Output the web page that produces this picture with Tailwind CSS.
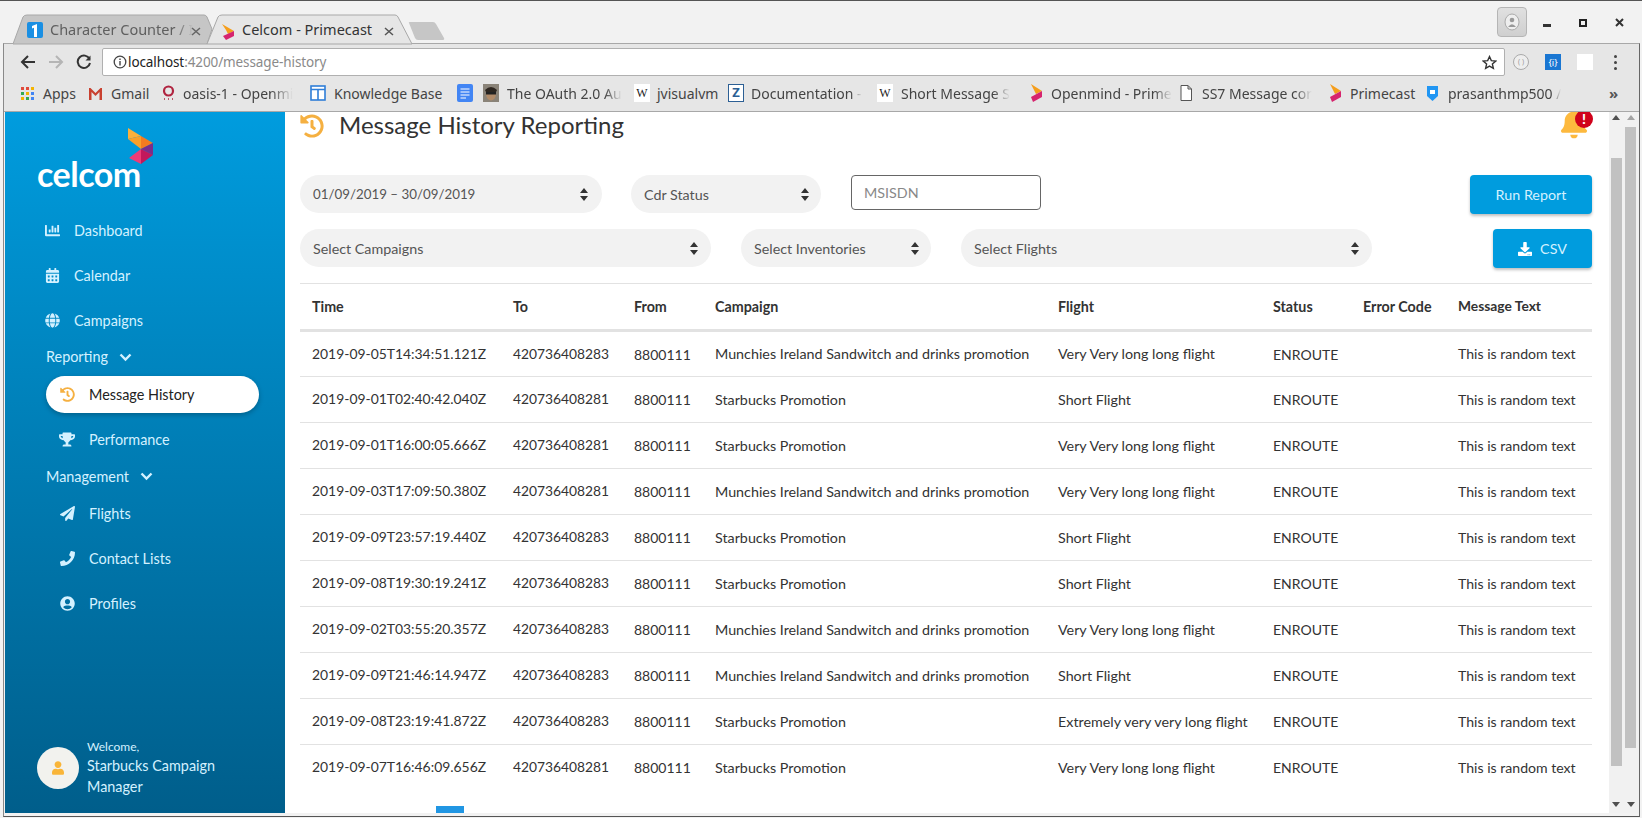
<!DOCTYPE html>
<html lang="en">
<head>
    <meta charset="UTF-8">
    <title>Celcom - Primecast</title>
    <script src="https://cdn.jsdelivr.net/npm/@tailwindcss/browser@4"></script>
</head>
<body class="bg-white overflow-hidden">
<div class="relative w-[1642px] h-[818px] bg-[#f2f2f2] overflow-hidden flex flex-col pl-[3px] pr-[2px] pb-[1px] font-['Noto_Sans',sans-serif] border-t border-[#555]">

    <!-- Tab strip -->
    <div class="relative h-[42px] shrink-0">
        <svg class="absolute -left-[3px] top-0" width="460" height="44" viewBox="0 0 460 44">
            <path d="M13 43 L23 16 Q24 14 27 14 L204 14 Q206 14 207 16 L212 28 L207 43 Z" fill="#c6c6c6" stroke="#a8a8a8"/>
            <path d="M207 43 L218 16 Q219 14 222 14 L395 14 Q397 14 398 16 L412 43 Z" fill="#e6e6e6" stroke="#a8a8a8"/>
            <path d="M409 22 Q408 21 410 21 L433 21 Q435 21 436 23 L444 37 Q445 39 442 39 L418 39 Q416 39 415 37 Z" fill="#c6c6c6"/>
            <rect x="27" y="21" width="16" height="16" rx="2" fill="#1a8fe3"/>
            <path d="M32 25 L37 23 L37 36 L34 36 L34 26.800 L32 27.500 Z" fill="#fff"/>
            <path d="M222 23 L234 30 L228 33 L226 29 Z" fill="#f59e1b"/>
            <path d="M234 30 L234 35 L226 39 L223 35 Z" fill="#d6246e"/>
            <path d="M192 27 L200 34 M200 27 L192 34" stroke="#666" stroke-width="1.500"/>
            <path d="M385 27 L393 34 M393 27 L385 34" stroke="#555" stroke-width="1.500"/>
        </svg>
        <span class="absolute left-[47px] top-[19px] whitespace-nowrap text-[14.500px] leading-[19px] text-[#5f5f5f] [mask-image:linear-gradient(90deg,#000_88%,transparent)]">Character Counter / I</span>
        <span class="absolute left-[239px] top-[19px] whitespace-nowrap text-[14.500px] leading-[19px] text-[#333]">Celcom - Primecast</span>
        <!-- Window controls -->
        <div class="absolute left-[1494px] top-[6px] w-[30px] h-[30px] rounded-[4px] border border-[#b5b5b5] bg-gradient-to-b from-[#e0e0e0] to-[#cfcfcf] flex items-center justify-center">
            <svg width="16" height="18" viewBox="0 0 16 18"><ellipse cx="8" cy="9" rx="7" ry="8" fill="#eee" stroke="#aaa"/><circle cx="8" cy="7" r="2.300" fill="#999"/><path d="M4 14 Q8 8.500 12 14 Z" fill="#999"/></svg>
        </div>
        <div class="absolute left-[1540px] top-[23px] w-[8px] h-[3px] bg-[#333]"></div>
        <div class="absolute left-[1576px] top-[18px] w-[8px] h-[8px] border-2 border-[#222]"></div>
        <svg class="absolute left-[1612px] top-[17px]" width="9" height="9" viewBox="0 0 9 9"><path d="M1 1 L8 8 M8 1 L1 8" stroke="#333" stroke-width="2"/></svg>
    </div>

    <!-- Window body with frame -->
    <div class="flex-1 min-h-0 flex flex-col border-l border-r border-b border-t border-l-[#8a8a8a] border-r-[#666] border-b-[#555] border-t-[#a8a8a8]">

    <!-- Browser toolbar -->
    <div class="h-[36px] shrink-0 bg-[#e6e6e6] flex items-center">
        <div class="w-[98px] shrink-0 flex items-center pl-[16px] gap-[12px]">
            <svg width="16" height="16" viewBox="0 0 16 16"><path d="M15 8 H2 M8 2 L2 8 L8 14" fill="none" stroke="#333" stroke-width="2"/></svg>
            <svg width="16" height="16" viewBox="0 0 16 16"><path d="M1 8 H14 M8 2 L14 8 L8 14" fill="none" stroke="#b5b5b5" stroke-width="2"/></svg>
            <svg width="16" height="16" viewBox="0 0 16 16"><path d="M13.500 5 A6.200 6.200 0 1 0 14 9" fill="none" stroke="#333" stroke-width="2"/><path d="M14.500 1.500 V6.500 H9.500 Z" fill="#333"/></svg>
        </div>
        <div class="w-[1403px] h-[28px] shrink-0 bg-white border border-[#b0b0b0] rounded-[2px] flex items-center pl-[10px] pr-[7px]">
            <svg width="14" height="14" viewBox="0 0 14 14"><circle cx="7" cy="7" r="5.800" fill="none" stroke="#444" stroke-width="1.300"/><rect x="6.300" y="6" width="1.400" height="4.500" fill="#444"/><rect x="6.300" y="3.500" width="1.400" height="1.500" fill="#444"/></svg>
            <span class="ml-[1px] text-[13.500px] text-[#222] tracking-[-0.1px]">localhost<span class="text-[#8a8a8a]">:4200/message-history</span></span>
            <svg class="ml-auto" width="15" height="15" viewBox="0 0 24 24"><path d="M12 2.500 L14.900 9 L22 9.700 L16.600 14.400 L18.200 21.500 L12 17.800 L5.800 21.500 L7.400 14.400 L2 9.700 L9.100 9 Z" fill="none" stroke="#333" stroke-width="2.200"/></svg>
        </div>
        <div class="flex-1 flex items-center pl-[8px]">
            <div class="w-[16px] h-[16px] rounded-full border border-[#aaa] bg-[#eee] flex items-center justify-center text-[7px] text-[#999]">( )</div>
            <div class="ml-[16px] w-[16px] h-[16px] bg-[#1976d2] flex items-center justify-center text-[9px] leading-none text-white">{i}</div>
            <div class="ml-[16px] w-[16px] h-[16px] bg-white"></div>
            <div class="ml-[21px] flex flex-col gap-[3px]">
                <span class="w-[3px] h-[3px] rounded-full bg-[#444]"></span>
                <span class="w-[3px] h-[3px] rounded-full bg-[#444]"></span>
                <span class="w-[3px] h-[3px] rounded-full bg-[#444]"></span>
            </div>
        </div>
    </div>

    <!-- Bookmarks bar -->
    <div class="h-[32px] shrink-0 bg-[#e6e6e6] border-b border-[#a8a8a8] flex items-center text-[14px] text-[#444] whitespace-nowrap pl-[16px] pb-[5px]">
        <div class="w-[68px] shrink-0 flex items-center gap-[8px]">
            <svg width="15" height="15" viewBox="0 0 15 15">
                <rect x="1" y="1" width="3" height="3" fill="#e04a3a"/><rect x="6" y="1" width="3" height="3" fill="#e04a3a"/><rect x="11" y="1" width="3" height="3" fill="#f4b400"/>
                <rect x="1" y="6" width="3" height="3" fill="#34a853"/><rect x="6" y="6" width="3" height="3" fill="#f4b400"/><rect x="11" y="6" width="3" height="3" fill="#4285f4"/>
                <rect x="1" y="11" width="3" height="3" fill="#f4b400"/><rect x="6" y="11" width="3" height="3" fill="#34a853"/><rect x="11" y="11" width="3" height="3" fill="#4285f4"/>
            </svg>
            <span>Apps</span>
        </div>
        <div class="w-[74px] shrink-0 flex items-center gap-[8px]">
            <svg width="15" height="13" viewBox="0 0 15 13"><path d="M1 13 V1 H2.500 L7.500 6 L12.500 1 H14 V13 H11.500 V5 L7.500 9 L3.500 5 V13 Z" fill="#c9402f"/></svg>
            <span>Gmail</span>
        </div>
        <div class="w-[148px] shrink-0 flex items-center gap-[8px]">
            <svg width="13" height="17" viewBox="0 0 13 17"><circle cx="6.500" cy="6" r="4.500" fill="none" stroke="#b02440" stroke-width="2.200"/><path d="M2 14 H3 M6 14 H7 M10 14 H11" stroke="#b02440" stroke-width="1.500"/></svg>
            <span class="[mask-image:linear-gradient(90deg,#000_80%,transparent)]">oasis-1 - Openmi</span>
        </div>
        <div class="w-[147px] shrink-0 flex items-center gap-[8px]">
            <svg width="16" height="16" viewBox="0 0 16 16"><rect x="1" y="1" width="14" height="14" fill="#fff" stroke="#2f7ed8" stroke-width="1.600"/><path d="M1 4.500 H15 M8 4.500 V15" stroke="#2f7ed8" stroke-width="1.600"/></svg>
            <span>Knowledge Base</span>
        </div>
        <div class="w-[26px] shrink-0">
            <svg width="16" height="18" viewBox="0 0 16 18"><rect width="16" height="18" rx="2" fill="#4285f4"/><path d="M3.500 5 H12.500 M3.500 8 H12.500 M3.500 11 H12.500 M3.500 14 H9" stroke="#fff" stroke-width="1.200"/></svg>
        </div>
        <div class="w-[151px] shrink-0 flex items-center gap-[8px]">
            <svg width="16" height="18" viewBox="0 0 16 18"><rect width="16" height="18" fill="#8a8378"/><ellipse cx="8" cy="10" rx="5" ry="6.500" fill="#b08a68"/><rect x="3" y="8" width="10" height="2.500" fill="#222"/><path d="M2 6 Q8 0 14 6 L13 8 L3 8 Z" fill="#2d2620"/></svg>
            <span class="[mask-image:linear-gradient(90deg,#000_85%,transparent)]">The OAuth 2.0 Au</span>
        </div>
        <div class="w-[94px] shrink-0 flex items-center gap-[7px]">
            <span class="w-[16px] h-[18px] bg-white flex items-center justify-center font-['Liberation_Serif',serif] text-[12px] text-[#222]">W</span>
            <span>jvisualvm</span>
        </div>
        <div class="w-[149px] shrink-0 flex items-center gap-[7px]">
            <span class="w-[16px] h-[18px] bg-white border border-[#2c5f94] flex items-center justify-center text-[13px] font-bold text-[#2c5f94]">Z</span>
            <span class="[mask-image:linear-gradient(90deg,#000_90%,transparent)]">Documentation -</span>
        </div>
        <div class="w-[152px] shrink-0 flex items-center gap-[8px]">
            <span class="w-[16px] h-[18px] bg-white flex items-center justify-center font-['Liberation_Serif',serif] text-[12px] text-[#222]">W</span>
            <span class="[mask-image:linear-gradient(90deg,#000_85%,transparent)]">Short Message S</span>
        </div>
        <div class="w-[150px] shrink-0 flex items-center gap-[8px]">
            <svg width="14" height="18" viewBox="0 0 14 18"><path d="M2 0 L13 7 L7 10 L5 6 Z" fill="#f59e1b"/><path d="M13 7 L13 13 L4 18 L2 13 Z" fill="#d6246e"/></svg>
            <span class="[mask-image:linear-gradient(90deg,#000_85%,transparent)]">Openmind - Prime</span>
        </div>
        <div class="w-[149px] shrink-0 flex items-center gap-[9px]">
            <svg width="14" height="18" viewBox="0 0 14 18"><path d="M2 1.500 H9 L12.500 5 V16.500 H2 Z M9 1.500 V5 H12.500" fill="#fff" stroke="#555"/></svg>
            <span class="[mask-image:linear-gradient(90deg,#000_85%,transparent)]">SS7 Message cor</span>
        </div>
        <div class="w-[99px] shrink-0 flex items-center gap-[8px]">
            <svg width="14" height="18" viewBox="0 0 14 18"><path d="M2 0 L13 7 L7 10 L5 6 Z" fill="#f59e1b"/><path d="M13 7 L13 13 L4 18 L2 13 Z" fill="#d6246e"/></svg>
            <span>Primecast</span>
        </div>
        <div class="w-[182px] shrink-0 flex items-center gap-[10px]">
            <svg width="11" height="15" viewBox="0 0 11 15"><path d="M0 0 H11 V10 L5.500 15 L0 10 Z" fill="#2196f3"/><rect x="3" y="4" width="5" height="4" fill="#fff"/></svg>
            <span class="[mask-image:linear-gradient(90deg,#000_92%,transparent)]">prasanthmp500 /</span>
        </div>
        <span class="text-[15px] font-bold text-[#555]">»</span>
    </div>

    <!-- Page -->
    <div class="flex-1 min-h-0 flex pl-[1px] pb-[3px] font-['Lato',sans-serif]">
        <!-- Sidebar -->
        <aside class="w-[280px] shrink-0 flex flex-col bg-gradient-to-b from-[#009cde] to-[#005e8b] text-[#d4f1ff] text-[14.400px] pl-[41px]">
            <svg class="mt-[16px] ml-[82px]" width="26" height="37" viewBox="0 0 26 37">
                <path d="M0 0 L13 8 L0 11 Z" fill="#fbb03b"/>
                <path d="M0 11 L13 8 L13 21 Z" fill="#f9a02a"/>
                <path d="M13 8 L25 15 L13 21 Z" fill="#f47b20"/>
                <path d="M25 15 L25 27 L13 21 Z" fill="#7b2d8b"/>
                <path d="M13 21 L25 27 L13 36 Z" fill="#c2185b"/>
                <path d="M13 21 L13 36 L1 30 Z" fill="#ec3b78"/>
            </svg>
            <div class="-ml-[9px] -mt-[4px] h-[32px] font-bold text-[34px] leading-[26px] text-white tracking-[-0.5px]">celcom</div>
            <nav class="mt-[15px] flex flex-col">
                <a class="h-[45px] flex items-center">
                    <svg class="w-[15px] h-[15px] fill-current mr-[14px] -ml-[1px]" viewBox="0 0 512 512"><path d="M332.800 320h38.400c6.400 0 12.800-6.400 12.800-12.800V172.800c0-6.400-6.400-12.800-12.800-12.800h-38.400c-6.400 0-12.800 6.400-12.800 12.800v134.400c0 6.400 6.400 12.800 12.800 12.800zm96 0h38.400c6.400 0 12.800-6.400 12.800-12.800V76.800c0-6.400-6.400-12.800-12.800-12.800h-38.400c-6.400 0-12.800 6.400-12.800 12.800v230.400c0 6.400 6.400 12.800 12.800 12.800zm-288 0h38.400c6.400 0 12.800-6.400 12.800-12.800v-70.400c0-6.400-6.400-12.800-12.800-12.800h-38.400c-6.400 0-12.800 6.400-12.800 12.800v70.400c0 6.400 6.400 12.800 12.800 12.800zm96 0h38.400c6.400 0 12.800-6.400 12.800-12.800V108.800c0-6.400-6.400-12.800-12.800-12.800h-38.400c-6.400 0-12.800 6.400-12.800 12.800v198.400c0 6.400 6.400 12.800 12.800 12.800zM496 384H64V80c0-8.840-7.160-16-16-16H16C7.160 64 0 71.160 0 80v336c0 17.670 14.330 32 32 32h464c8.840 0 16-7.160 16-16v-32c0-8.840-7.160-16-16-16z"/></svg>
                    Dashboard
                </a>
                <a class="h-[45px] flex items-center">
                    <svg class="w-[15px] h-[15px] fill-current mr-[14px] -ml-[1px]" viewBox="0 0 448 512"><path d="M0 464c0 26.500 21.500 48 48 48h352c26.500 0 48-21.500 48-48V192H0v272zm320-196c0-6.600 5.400-12 12-12h40c6.600 0 12 5.400 12 12v40c0 6.600-5.400 12-12 12h-40c-6.600 0-12-5.400-12-12v-40zm0 128c0-6.600 5.400-12 12-12h40c6.600 0 12 5.400 12 12v40c0 6.600-5.400 12-12 12h-40c-6.600 0-12-5.400-12-12v-40zM192 268c0-6.600 5.400-12 12-12h40c6.600 0 12 5.400 12 12v40c0 6.600-5.400 12-12 12h-40c-6.600 0-12-5.400-12-12v-40zm0 128c0-6.600 5.400-12 12-12h40c6.600 0 12 5.400 12 12v40c0 6.600-5.400 12-12 12h-40c-6.600 0-12-5.400-12-12v-40zM64 268c0-6.600 5.400-12 12-12h40c6.600 0 12 5.400 12 12v40c0 6.600-5.400 12-12 12H76c-6.600 0-12-5.400-12-12v-40zm0 128c0-6.600 5.400-12 12-12h40c6.600 0 12 5.400 12 12v40c0 6.600-5.400 12-12 12H76c-6.600 0-12-5.400-12-12v-40zM400 64h-48V16c0-8.800-7.200-16-16-16h-32c-8.800 0-16 7.200-16 16v48H160V16c0-8.800-7.200-16-16-16h-32c-8.800 0-16 7.200-16 16v48H48C21.500 64 0 85.500 0 112v48h448v-48c0-26.500-21.500-48-48-48z"/></svg>
                    Calendar
                </a>
                <a class="h-[45px] flex items-center">
                    <svg class="w-[15px] h-[15px] fill-current mr-[14px] -ml-[1px]" viewBox="0 0 496 512"><path d="M336.500 160C322 70.700 287.800 8 248 8s-74 62.700-88.500 152h177zM152 256c0 22.200 1.200 43.500 3.300 64h185.300c2.100-20.500 3.300-41.800 3.300-64s-1.200-43.500-3.300-64H155.300c-2.100 20.500-3.300 41.800-3.300 64zm324.700-96c-28.600-67.900-86.500-120.400-158-141.600 24.400 33.800 41.200 84.700 50 141.600h108zM177.200 18.400C105.800 39.600 47.800 92.100 19.300 160h108c8.700-56.900 25.500-107.800 49.900-141.600zM487.400 192H372.700c2.100 21 3.300 42.500 3.300 64s-1.200 43-3.300 64h114.600c5.500-20.500 8.600-41.800 8.600-64s-3.100-43.500-8.500-64zM120 256c0-21.500 1.200-43 3.300-64H8.600C3.200 212.500 0 233.800 0 256s3.200 43.500 8.600 64h114.600c-2-21-3.200-42.500-3.200-64zm39.500 96c14.500 89.300 48.700 152 88.500 152s74-62.700 88.500-152h-177zm159.300 141.600c71.400-21.200 129.400-73.700 158-141.600h-108c-8.800 56.900-25.600 107.800-50 141.600zM19.300 352c28.600 67.900 86.500 120.400 158 141.600-24.400-33.800-41.200-84.700-50-141.600h-108z"/></svg>
                    Campaigns
                </a>
                <div class="h-[28px] flex items-center">
                    Reporting
                    <svg class="ml-[11px]" width="13" height="9" viewBox="0 0 13 9"><path d="M1.500 1.500 L6.500 6.500 L11.500 1.500" fill="none" stroke="currentColor" stroke-width="2.400"/></svg>
                </div>
                <a class="w-[213px] h-[37px] mt-[5px] rounded-[19px] bg-white shadow-[0_2px_5px_rgba(0,0,0,0.25)] text-[#222] flex items-center pl-[14px]">
                    <svg class="w-[15px] h-[15px] fill-[#f5b041] mr-[14px]" viewBox="0 0 512 512"><path d="M504 255.531c.253 136.640-111.180 248.372-247.820 248.468-59.015.042-113.223-20.530-155.822-54.911-11.077-8.940-11.905-25.541-1.839-35.607l11.267-11.267c8.609-8.609 22.353-9.551 31.891-1.984C173.062 425.135 212.781 440 256 440c101.705 0 184-82.311 184-184 0-101.705-82.311-184-184-184-48.814 0-93.149 18.969-126.068 49.932l50.754 50.754c10.080 10.080 2.941 27.314-11.313 27.314H24c-8.837 0-16-7.163-16-16V38.627c0-14.254 17.234-21.393 27.314-11.314l49.372 49.372C129.209 34.136 189.552 8 256 8c136.810 0 247.747 110.780 248 247.531zm-180.912 78.784l9.823-12.630c8.138-10.463 6.253-25.542-4.210-33.679L288 256.349V152c0-13.255-10.745-24-24-24h-16c-13.255 0-24 10.745-24 24v135.651l65.409 50.874c10.463 8.137 25.541 6.253 33.679-4.210z"/></svg>
                    Message History
                </a>
                <a class="h-[45px] mt-[4px] flex items-center pl-[13px]">
                    <svg class="w-[16px] h-[15px] fill-current mr-[14px]" viewBox="0 0 576 512"><path d="M552 64H448V24c0-13.300-10.700-24-24-24H152c-13.300 0-24 10.700-24 24v40H24C10.700 64 0 74.700 0 88v56c0 35.700 22.500 72.400 61.900 100.700 31.500 22.700 69.800 37.100 110 41.700C203.300 338.500 240 360 240 360v72h-48c-35.300 0-64 20.700-64 56v12c0 6.600 5.400 12 12 12h296c6.600 0 12-5.400 12-12v-12c0-35.300-28.700-56-64-56h-48v-72s36.700-21.500 68.100-73.600c40.300-4.600 78.700-19 110-41.700 39.300-28.300 61.900-65 61.900-100.700V88c0-13.300-10.700-24-24-24zM99.300 192.800C74.900 175.200 64 155.600 64 144v-16h64.200c1 32.600 5.800 61.200 12.800 86.200-15.100-5.200-29.200-12.400-41.700-21.400zM512 144c0 16.100-17.700 36.100-35.300 48.800-12.500 9-26.700 16.200-41.800 21.400 7-25 11.800-53.600 12.800-86.200H512v16z"/></svg>
                    Performance
                </a>
                <div class="h-[29px] flex items-center">
                    Management
                    <svg class="ml-[11px]" width="13" height="9" viewBox="0 0 13 9"><path d="M1.500 1.500 L6.500 6.500 L11.500 1.500" fill="none" stroke="currentColor" stroke-width="2.400"/></svg>
                </div>
                <a class="h-[45px] flex items-center pl-[14px]">
                    <svg class="w-[15px] h-[15px] fill-current mr-[14px]" viewBox="0 0 512 512"><path d="M476 3.200L12.500 270.600c-18.100 10.400-15.800 35.600 2.200 43.200L121 358.400l287.300-253.200c5.500-4.900 13.300 2.600 8.600 8.300L176 407v80.500c0 23.600 28.500 32.900 42.500 15.800L282 426l124.600 52.200c14.200 6 30.400-2.900 33-18.200l72-432C515 7.800 493.300-6.800 476 3.200z"/></svg>
                    Flights
                </a>
                <a class="h-[45px] flex items-center pl-[14px]">
                    <svg class="w-[15px] h-[15px] fill-current mr-[14px]" viewBox="0 0 512 512"><path d="M493.400 24.600l-104-24c-11.300-2.600-22.900 3.300-27.500 13.900l-48 112c-4.200 9.800-1.400 21.300 6.900 28l60.600 49.600c-36 76.700-98.900 140.500-177.200 177.200l-49.600-60.600c-6.800-8.300-18.200-11.100-28-6.900l-112 48C3.900 366.500-2 378.100.6 389.400l24 104C27.100 504.200 36.700 512 48 512c256.100 0 464-207.500 464-464 0-11.200-7.700-20.900-18.600-23.400z"/></svg>
                    Contact Lists
                </a>
                <a class="h-[45px] flex items-center pl-[14px]">
                    <svg class="w-[15px] h-[15px] fill-current mr-[14px]" viewBox="0 0 496 512"><path d="M248 8C111 8 0 119 0 256s111 248 248 248 248-111 248-248S385 8 248 8zm0 96c48.600 0 88 39.400 88 88s-39.400 88-88 88-88-39.400-88-88 39.400-88 88-88zm0 344c-58.700 0-111.300-26.600-146.500-68.200 18.800-35.400 55.600-59.800 98.500-59.800 2.400 0 4.800.4 7.100 1.100 13 4.200 26.600 6.900 40.900 6.900 14.300 0 28-2.700 40.900-6.900 2.300-.7 4.700-1.100 7.100-1.100 42.900 0 79.700 24.400 98.500 59.800C359.300 421.400 306.700 448 248 448z"/></svg>
                    Profiles
                </a>
            </nav>
            <div class="mt-auto mb-[16px] -ml-[9px] flex items-center gap-[8px]">
                <div class="w-[42px] h-[42px] rounded-full bg-[#f2f2ee] flex items-center justify-center shrink-0">
                    <svg class="w-[12px] h-[14px] fill-[#f9b538]" viewBox="0 0 448 512"><path d="M224 256c70.700 0 128-57.300 128-128S294.700 0 224 0 96 57.300 96 128s57.300 128 128 128zm89.600 32h-16.700c-22.200 10.200-46.900 16-72.900 16s-50.600-5.800-72.900-16h-16.700C60.200 288 0 348.200 0 422.400V464c0 26.500 21.500 48 48 48h352c26.500 0 48-21.500 48-48v-41.600c0-74.200-60.200-134.400-134.400-134.400z"/></svg>
                </div>
                <div class="w-[150px]">
                    <div class="text-[12px] leading-[16px]">Welcome,</div>
                    <div class="text-[14.400px] leading-[21px]">Starbucks Campaign Manager</div>
                </div>
            </div>
        </aside>

        <!-- Main content -->
        <main class="relative flex-1 min-w-0 bg-white overflow-hidden pl-[15px] pr-[17px] text-[14.300px] text-[#333]">
            <header class="h-[63px] flex items-start">
                <svg class="w-[24px] h-[24px] mt-[2px] fill-[#f5b041]" viewBox="0 0 512 512"><path d="M504 255.531c.253 136.640-111.180 248.372-247.820 248.468-59.015.042-113.223-20.530-155.822-54.911-11.077-8.940-11.905-25.541-1.839-35.607l11.267-11.267c8.609-8.609 22.353-9.551 31.891-1.984C173.062 425.135 212.781 440 256 440c101.705 0 184-82.311 184-184 0-101.705-82.311-184-184-184-48.814 0-93.149 18.969-126.068 49.932l50.754 50.754c10.080 10.080 2.941 27.314-11.313 27.314H24c-8.837 0-16-7.163-16-16V38.627c0-14.254 17.234-21.393 27.314-11.314l49.372 49.372C129.209 34.136 189.552 8 256 8c136.810 0 247.747 110.780 248 247.531zm-180.912 78.784l9.823-12.630c8.138-10.463 6.253-25.542-4.210-33.679L288 256.349V152c0-13.255-10.745-24-24-24h-16c-13.255 0-24 10.745-24 24v135.651l65.409 50.874c10.463 8.137 25.541 6.253 33.679-4.210z"/></svg>
                <h1 class="ml-[15px] text-[24px] leading-[26px] text-[#333]">Message History Reporting</h1>
                <div class="relative ml-auto mr-[5px] w-[26px] h-[26px]">
                    <svg class="w-[26px] h-[31px] -mt-[4px] fill-[#fdb93e]" viewBox="0 0 448 512"><path d="M224 512c35.320 0 63.970-28.650 63.970-64H160.030c0 35.350 28.650 64 63.970 64zm215.390-149.710c-19.320-20.760-55.470-51.990-55.470-154.290 0-77.700-54.480-139.900-127.940-155.160V32c0-17.670-14.320-32-31.980-32s-31.980 14.330-31.980 32v20.840C118.560 68.100 64.080 130.300 64.080 208c0 102.300-36.150 133.530-55.470 154.290-6 6.450-8.660 14.160-8.610 21.710.11 16.400 12.980 32 32.100 32h383.800c19.120 0 32-15.600 32.100-32 .05-7.550-2.610-15.270-8.610-21.710z"/></svg>
                    <span class="absolute -right-[6px] -top-[2px] w-[18px] h-[18px] rounded-full bg-[#d0021b] text-white text-[14px] leading-[18px] font-black text-center">!</span>
                </div>
            </header>

            <!-- Filters -->
            <div class="flex items-start h-[54px]">
                <div class="w-[302px] h-[38px] rounded-[19px] bg-[#f2f2f2] flex items-center justify-between pl-[13px] pr-[14px] pt-[1px] text-[13.330px] text-[#555]">
                    01/09/2019 – 30/09/2019
                    <svg width="8" height="13" viewBox="0 0 8 13"><path d="M4 0 L8 5 H0 Z M0 8 H8 L4 13 Z" fill="#333"/></svg>
                </div>
                <div class="ml-[29px] w-[190px] h-[38px] rounded-[19px] bg-[#f2f2f2] flex items-center justify-between pl-[13px] pr-[12px] pt-[1px] text-[#555]">
                    Cdr Status
                    <svg width="8" height="13" viewBox="0 0 8 13"><path d="M4 0 L8 5 H0 Z M0 8 H8 L4 13 Z" fill="#333"/></svg>
                </div>
                <div class="ml-[30px] w-[190px] h-[35px] rounded-[4px] border border-[#666] flex items-center pl-[12px] text-[#888]">MSISDN</div>
                <button class="ml-auto w-[122px] h-[39px] rounded-[4px] bg-[#009cde] text-[#d4f1ff] shadow-[0_2px_3px_rgba(0,0,0,0.25)]">Run Report</button>
            </div>
            <div class="flex items-start h-[54px]">
                <div class="w-[411px] h-[38px] rounded-[19px] bg-[#f2f2f2] flex items-center justify-between pl-[13px] pr-[13px] pt-[1px] text-[#555]">
                    Select Campaigns
                    <svg width="8" height="13" viewBox="0 0 8 13"><path d="M4 0 L8 5 H0 Z M0 8 H8 L4 13 Z" fill="#333"/></svg>
                </div>
                <div class="ml-[30px] w-[190px] h-[38px] rounded-[19px] bg-[#f2f2f2] flex items-center justify-between pl-[13px] pr-[12px] pt-[1px] text-[#555]">
                    Select Inventories
                    <svg width="8" height="13" viewBox="0 0 8 13"><path d="M4 0 L8 5 H0 Z M0 8 H8 L4 13 Z" fill="#333"/></svg>
                </div>
                <div class="ml-[30px] w-[411px] h-[38px] rounded-[19px] bg-[#f2f2f2] flex items-center justify-between pl-[13px] pr-[13px] pt-[1px] text-[#555]">
                    Select Flights
                    <svg width="8" height="13" viewBox="0 0 8 13"><path d="M4 0 L8 5 H0 Z M0 8 H8 L4 13 Z" fill="#333"/></svg>
                </div>
                <button class="ml-auto w-[99px] h-[39px] rounded-[4px] bg-[#009cde] text-[#d4f1ff] shadow-[0_2px_3px_rgba(0,0,0,0.25)] flex items-center justify-center gap-[8px]">
                    <svg class="w-[14px] h-[14px] fill-white" viewBox="0 0 512 512"><path d="M216 0h80c13.300 0 24 10.700 24 24v168h87.700c17.800 0 26.700 21.500 14.100 34.100L269.700 378.300c-7.500 7.500-19.800 7.500-27.300 0L90.100 226.100c-12.600-12.600-3.700-34.100 14.100-34.100H192V24c0-13.300 10.700-24 24-24zm296 376v112c0 13.300-10.700 24-24 24H24c-13.300 0-24-10.700-24-24V376c0-13.300 10.700-24 24-24h146.700l49 49c20.100 20.100 52.500 20.100 72.600 0l49-49H488c13.300 0 24 10.700 24 24zm-124 88c0-11-9-20-20-20s-20 9-20 20 9 20 20 20 20-9 20-20zm64 0c0-11-9-20-20-20s-20 9-20 20 9 20 20 20 20-9 20-20z"/></svg>
                    CSV
                </button>
            </div>

            <!-- Table -->
            <table class="w-full table-fixed border-t border-[#e2e2e2]">
                <thead>
                    <tr class="h-[47px] border-b-[3px] border-[#e2e2e2] text-left font-bold">
                        <th class="w-[213px] pl-[12px] font-bold">Time</th>
                        <th class="w-[121px] font-bold">To</th>
                        <th class="w-[81px] font-bold">From</th>
                        <th class="w-[343px] font-bold">Campaign</th>
                        <th class="w-[215px] font-bold">Flight</th>
                        <th class="w-[90px] font-bold">Status</th>
                        <th class="w-[95px] font-bold">Error Code</th>
                        <th class="font-bold text-[13.800px]">Message Text</th>
                    </tr>
                </thead>
                <tbody id="rows"></tbody>
            </table>

            <div class="absolute left-[151px] bottom-0 w-[28px] h-[7px] bg-[#2196e3]"></div>
        </main>

        <!-- Scrollbars -->
        <div class="relative w-[15px] shrink-0 bg-[#f1f1f1]">
            <span class="absolute left-[3px] top-[3px] w-0 h-0 border-x-[4px] border-x-transparent border-b-[5px] border-b-[#505050]"></span>
            <div class="absolute left-[2px] top-[46px] w-[11px] h-[608px] bg-[#c1c1c1]"></div>
            <span class="absolute left-[3px] bottom-[6px] w-0 h-0 border-x-[4px] border-x-transparent border-t-[5px] border-t-[#505050]"></span>
        </div>
        <div class="relative w-[15px] shrink-0 bg-[#f1f1f1]">
            <span class="absolute left-[3px] top-[3px] w-0 h-0 border-x-[4px] border-x-transparent border-b-[5px] border-b-[#a3a3a3]"></span>
            <div class="absolute left-[1px] top-[15px] w-[11px] h-[621px] bg-[#c1c1c1]"></div>
            <span class="absolute left-[3px] bottom-[6px] w-0 h-0 border-x-[4px] border-x-transparent border-t-[5px] border-t-[#505050]"></span>
        </div>
    </div>
    </div>
</div>

<script>
    const rows = [
        ['2019-09-05T14:34:51.121Z', '420736408283', 'Munchies Ireland Sandwitch and drinks promotion', 'Very Very long long flight'],
        ['2019-09-01T02:40:42.040Z', '420736408281', 'Starbucks Promotion', 'Short Flight'],
        ['2019-09-01T16:00:05.666Z', '420736408281', 'Starbucks Promotion', 'Very Very long long flight'],
        ['2019-09-03T17:09:50.380Z', '420736408281', 'Munchies Ireland Sandwitch and drinks promotion', 'Very Very long long flight'],
        ['2019-09-09T23:57:19.440Z', '420736408283', 'Starbucks Promotion', 'Short Flight'],
        ['2019-09-08T19:30:19.241Z', '420736408283', 'Starbucks Promotion', 'Short Flight'],
        ['2019-09-02T03:55:20.357Z', '420736408283', 'Munchies Ireland Sandwitch and drinks promotion', 'Very Very long long flight'],
        ['2019-09-09T21:46:14.947Z', '420736408283', 'Munchies Ireland Sandwitch and drinks promotion', 'Short Flight'],
        ['2019-09-08T23:19:41.872Z', '420736408283', 'Starbucks Promotion', 'Extremely very very long flight'],
        ['2019-09-07T16:46:09.656Z', '420736408281', 'Starbucks Promotion', 'Very Very long long flight'],
    ];
    document.getElementById('rows').innerHTML = rows.map((r, i) => `
        <tr class="h-[46px] ${i < rows.length - 1 ? 'border-b border-[#e2e2e2]' : ''}">
            <td class="pl-[12px] text-[13.900px]">${r[0]}</td>
            <td class="text-[13.800px]">${r[1]}</td>
            <td class="text-[14px]">8800111</td>
            <td>${r[2]}</td>
            <td>${r[3]}</td>
            <td class="text-[14px]">ENROUTE</td>
            <td></td>
            <td class="text-[14.100px]">This is random text</td>
        </tr>`).join('');
</script>
</body>
</html>
